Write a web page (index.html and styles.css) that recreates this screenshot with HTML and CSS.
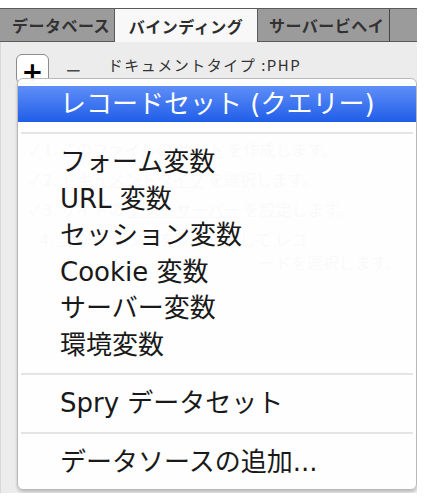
FILE: index.html
```html
<!DOCTYPE html>
<html lang="ja">
<head>
    <meta charset="UTF-8">
    <title>バインディング</title>
    <link rel="stylesheet" href="styles.css">
</head>
<body>
    <div class="window">
        <div class="tabs">
            <div class="tab tab-db">データベース</div>
            <div class="tab tab-active">バインディング</div>
            <div class="tab tab-server">サーバービヘイ</div>
            <div class="tab tab-rest"></div>
        </div>
        <div class="panel">
            <div class="toolbar">
                <span class="btn-plus">+</span>
                <span class="btn-minus">−</span>
                <span class="doctype">ドキュメントタイプ :PHP</span>
            </div>
            <div class="hint">
                <p>✓ 1. このファイルの <u>サイト</u> を作成します。</p>
                <p>✓ 2. <u>ドキュメントタイプ</u> を選択します。</p>
                <p>✓ 3. サイトの <u>テストサーバー</u> を設定します。</p>
                <p>&nbsp;&nbsp;&nbsp;4. 上の ＋ ボタンをクリックして レコ</p>
                <p class="indent">ードを選択します。</p>
            </div>

            <ul class="menu">
                <li class="item selected">レコードセット (クエリー)</li>
                <li class="sep"></li>
                <li class="item">フォーム変数</li>
                <li class="item">URL 変数</li>
                <li class="item">セッション変数</li>
                <li class="item">Cookie 変数</li>
                <li class="item">サーバー変数</li>
                <li class="item">環境変数</li>
                <li class="sep"></li>
                <li class="item">Spry データセット</li>
                <li class="sep"></li>
                <li class="item">データソースの追加...</li>
            </ul>
        </div>
    </div>
</body>
</html>
```

FILE: styles.css
```css
body{
    margin: 0;
    background-color: white;
    font-family: "DejaVu Sans", "Noto Sans CJK JP", sans-serif;
}
.window{
    width: 417px;
    margin-top: 8px;
}
.tabs{
    display: flex;
    height: 33px;
    background-color: rgb(155, 155, 155);
    border-top: 1px solid rgb(90, 90, 90);
}
.tab{
    display: flex;
    align-items: center;
    justify-content: center;
    font-family: "Noto Sans CJK JP", sans-serif;
    font-size: 16px;
    font-weight: bold;
    letter-spacing: 0.5px;
    color: rgb(50, 50, 50);
    border-bottom: 1px solid rgb(90, 90, 90);
    box-sizing: border-box;
}
.tab-db{
    width: 115px;
    padding-left: 8px;
    border-right: 1px solid rgb(90, 90, 90);
}
.tab-active{
    width: 142px;
    background-color: rgb(248, 248, 248);
    border-bottom: none;
    color: rgb(45, 45, 45);
}
.tab-server{
    width: 133px;
    border-left: 1px solid rgb(90, 90, 90);
    border-right: 1px solid rgb(70, 70, 70);
    justify-content: flex-start;
    padding-left: 11px;
    white-space: nowrap;
    overflow: hidden;
}
.tab-rest{
    flex: 1;
}
.panel{
    position: relative;
    height: 451px;
    overflow: hidden;
    background-color: rgb(236, 236, 236);
    border-left: 1px solid rgb(215, 215, 215);
}
.toolbar{
    display: flex;
    align-items: flex-start;
    height: 30px;
    padding: 12px 0 0 15px;
}
.btn-plus{
    width: 33px;
    height: 30px;
    box-sizing: border-box;
    padding-top: 6px;
    border: 1px solid rgb(140, 140, 140);
    border-radius: 6px;
    background-color: white;
    font-size: 26px;
    font-weight: bold;
    line-height: 22px;
    text-align: center;
    color: black;
}
.btn-minus{
    margin: 4px 0 0 16px;
    font-size: 20px;
    color: rgb(70, 70, 70);
}
.doctype{
    margin: 0 0 0 26px;
    font-family: "Noto Sans CJK JP", sans-serif;
    font-size: 15px;
    letter-spacing: 1.5px;
    color: rgb(50, 50, 50);
}
.hint{
    padding: 50px 0 0 28px;
    font-family: "Noto Sans CJK JP", sans-serif;
    font-size: 16px;
    line-height: 30px;
    color: rgb(150, 150, 150);
    white-space: nowrap;
    overflow: hidden;
}
.hint p{
    margin: 0;
}
.hint .indent{
    padding-left: 230px;
    line-height: 16px;
}
/* ポップアップメニュー */
.menu{
    position: absolute;
    top: 36px;
    left: 16px;
    width: 400px;
    height: 412px;
    box-sizing: border-box;
    margin: 0;
    padding: 7px 0 0 0;
    list-style: none;
    background-color: rgba(255, 255, 255, 0.94);
    border: 1px solid rgb(185, 185, 185);
    border-radius: 6px;
    box-shadow: 0 2px 3px rgba(0, 0, 0, 0.2);
}
.item{
    height: 36.5px;
    line-height: 36.5px;
    padding-left: 42px;
    font-size: 26px;
    color: rgb(25, 25, 25);
    white-space: nowrap;
}
.selected{
    height: 36px;
    line-height: 36px;
    color: white;
    background: linear-gradient(rgb(95, 142, 248), rgb(32, 94, 232));
}
.sep{
    height: 22px;
    display: flex;
    align-items: center;
    padding: 0 3px;
}
.sep:last-of-type{
    height: 25px;
}
.sep::after{
    content: "";
    flex: 1;
    height: 2px;
    background-color: rgb(228, 228, 228);
}
```
